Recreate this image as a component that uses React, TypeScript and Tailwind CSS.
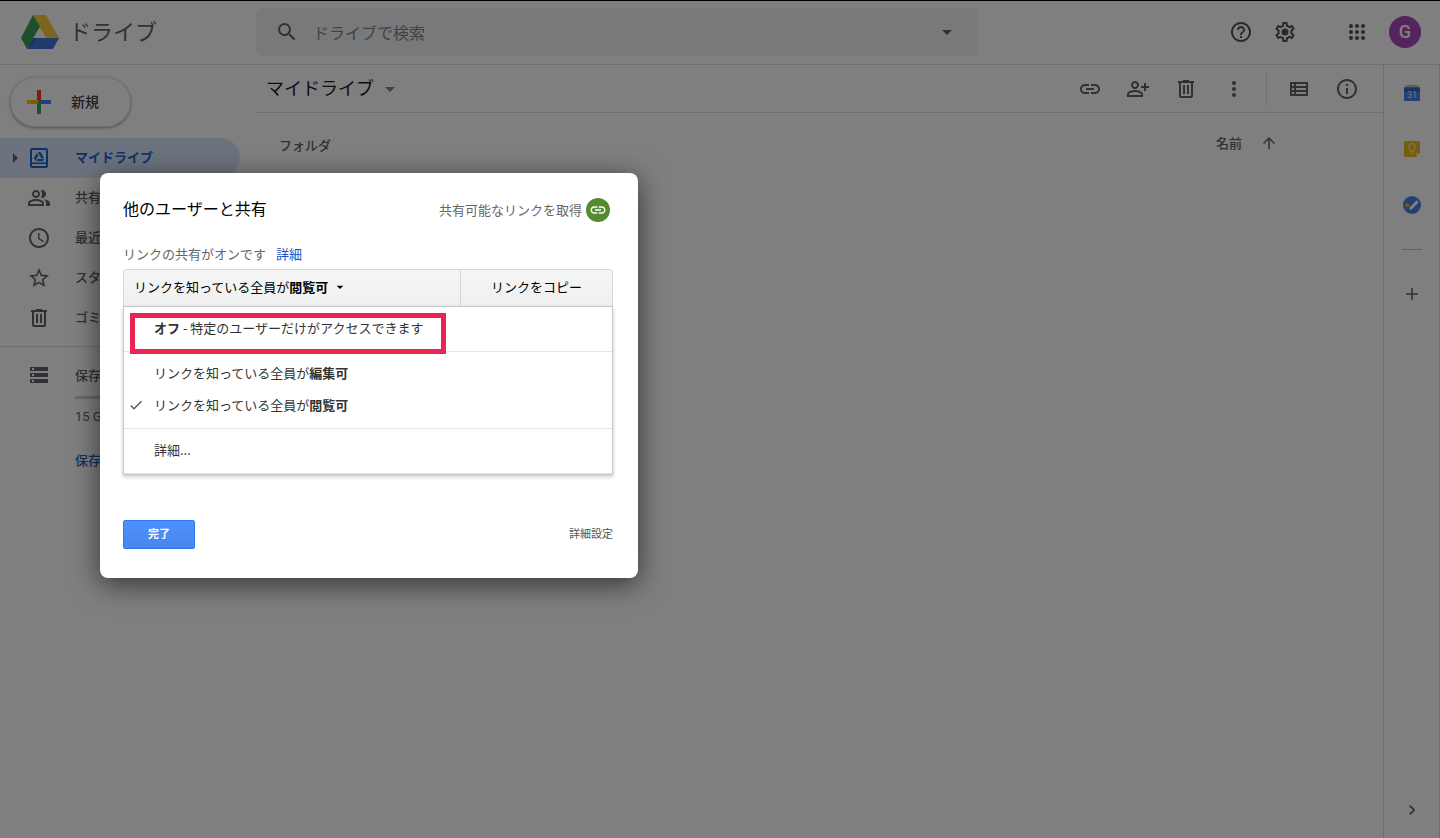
import React from 'react';
import {
  MdAccessTime,
  MdAdd,
  MdArrowDropDown,
  MdArrowRight,
  MdArrowUpward,
  MdCheck,
  MdChevronRight,
  MdHelpOutline,
  MdInfoOutline,
  MdLink,
  MdMoreVert,
  MdSearch,
  MdStarBorder,
} from 'react-icons/md';

type IconProps = { className?: string };

const DriveLogo = () => (
  <svg viewBox="0 0 38 34" className="h-[34px] w-[38px]" aria-hidden="true">
    <path d="M12 0h13l13 23H25z" fill="#fbc93e" />
    <path d="M12 0l7 11.6L6 34 0 23z" fill="#3a9f5b" />
    <path d="M12.4 23H38l-6 11H6z" fill="#3f77d8" />
    <path d="M12.4 23l4 0L6 34z" fill="#2f62b8" />
  </svg>
);

const NewPlus = () => (
  <svg viewBox="0 0 24 24" className="size-6" aria-hidden="true">
    <path d="M10 0h4v12h-4z" fill="#ea4335" />
    <path d="M10 12h4v12h-4z" fill="#34a853" />
    <path d="M0 10h12l-2 4H0z" fill="#fbbc04" />
    <path d="M14 10h10v4H12z" fill="#4285f4" />
  </svg>
);

const MyDriveIcon = ({ className }: IconProps) => (
  <svg viewBox="0 0 24 24" className={className} fill="currentColor" aria-hidden="true">
    <path
      fillRule="evenodd"
      d="M5 2h14c1.1 0 2 .9 2 2v16c0 1.1-.9 2-2 2H5c-1.1 0-2-.9-2-2V4c0-1.100.9-2 2-2zm0 2v12.500h14V4zm0 14v2h14v-2z"
    />
    <path d="M10.700 6h2.800l3.700 6.300h-2.900zM10 7l1.500 2.500-3.200 5.200L6.800 12.300zM10.600 12.900h6.500l-1.400 2.300H9.200z" />
  </svg>
);

const PeopleIcon = ({ className }: IconProps) => (
  <svg viewBox="0 0 24 24" className={className} fill="currentColor" aria-hidden="true">
    <path d="M16.67 13.13C18.04 14.06 19 15.32 19 17v3h4v-3c0-2.18-3.57-3.47-6.33-3.87zM15 12c2.210 0 4-1.790 4-4s-1.790-4-4-4c-.47 0-.91.1-1.330.24C14.5 5.270 15 6.580 15 8s-.5 2.730-1.330 3.760c.42.14.86.24 1.330.24z" />
    <path d="M9 12c2.210 0 4-1.790 4-4s-1.790-4-4-4-4 1.790-4 4 1.790 4 4 4zm0-6c1.100 0 2 .9 2 2s-.9 2-2 2-2-.9-2-2 .9-2 2-2zM9 13c-2.670 0-8 1.340-8 4v3h16v-3c0-2.660-5.330-4-8-4zm6 5H3v-.99C3.200 16.290 6.300 15 9 15s5.800 1.290 6 2v1z" />
  </svg>
);

const PersonAddIcon = ({ className }: IconProps) => (
  <svg viewBox="0 0 24 24" className={className} fill="currentColor" aria-hidden="true">
    <path d="M9 12c2.210 0 4-1.790 4-4s-1.790-4-4-4-4 1.790-4 4 1.790 4 4 4zm0-6c1.100 0 2 .9 2 2s-.9 2-2 2-2-.9-2-2 .9-2 2-2zM9 13c-2.670 0-8 1.340-8 4v3h16v-3c0-2.660-5.330-4-8-4zm6 5H3v-.99C3.200 16.290 6.300 15 9 15s5.800 1.290 6 2v1z" />
    <path d="M20 9V6h-2v3h-3v2h3v3h2v-3h3V9z" />
  </svg>
);

const TrashIcon = ({ className }: IconProps) => (
  <svg viewBox="0 0 24 24" className={className} fill="currentColor" aria-hidden="true">
    <path d="M15 4V3H9v1H4v2h1v13c0 1.100.9 2 2 2h10c1.100 0 2-.9 2-2V6h1V4h-5zm2 15H7V6h10v13zM9 8h2v9H9zm4 0h2v9h-2z" />
  </svg>
);

const StorageIcon = ({ className }: IconProps) => (
  <svg viewBox="0 0 24 24" className={className} fill="currentColor" aria-hidden="true">
    <path
      fillRule="evenodd"
      d="M3 4h18v4H3zm2 1v2h2V5zM3 10h18v4H3zm2 1v2h2v-2zM3 16h18v4H3zm2 1v2h2v-2z"
    />
  </svg>
);

const ListIcon = ({ className }: IconProps) => (
  <svg viewBox="0 0 24 24" className={className} fill="currentColor" aria-hidden="true">
    <path d="M3 5v14h18V5H3zm4 2v2H5V7h2zm-2 6v-2h2v2H5zm0 2h2v2H5v-2zm14 2H9v-2h10v2zm0-4H9v-2h10v2zm0-4H9V7h10v2z" />
  </svg>
);

const GearIcon = ({ className }: IconProps) => (
  <svg viewBox="0 0 24 24" className={className} fill="currentColor" aria-hidden="true">
    <path d="M19.43 12.98c.04-.32.07-.64.07-.98 0-.34-.03-.66-.07-.98l2.11-1.65c.19-.15.24-.42.12-.64l-2-3.46c-.09-.16-.26-.25-.44-.25-.06 0-.12.01-.17.03l-2.49 1c-.52-.4-1.08-.73-1.69-.98l-.38-2.65C14.46 2.18 14.25 2 14 2h-4c-.25 0-.46.18-.49.42l-.38 2.65c-.61.25-1.17.59-1.69.98l-2.49-1c-.06-.02-.12-.03-.18-.03-.17 0-.34.09-.43.25l-2 3.46c-.13.22-.07.49.12.64l2.11 1.65c-.04.32-.07.65-.07.98 0 .33.03.66.07.98l-2.11 1.65c-.19.15-.24.42-.12.64l2 3.46c.09.16.26.25.44.25.06 0 .12-.01.17-.03l2.49-1c.52.4 1.08.73 1.69.98l.38 2.65c.03.24.24.42.49.42h4c.25 0 .46-.18.49-.42l.38-2.65c.61-.25 1.17-.59 1.69-.98l2.49 1c.06.02.12.03.18.03.17 0 .34-.09.43-.25l2-3.46c.12-.22.07-.49-.12-.64l-2.11-1.65zm-1.98-1.71c.04.31.05.52.05.73 0 .21-.02.43-.05.73l-.14 1.13.89.7 1.08.84-.7 1.21-1.27-.51-1.04-.42-.9.68c-.43.32-.84.56-1.25.73l-1.06.43-.16 1.13-.2 1.35h-1.4l-.19-1.35-.16-1.13-1.06-.43c-.43-.18-.83-.41-1.23-.71l-.91-.7-1.06.43-1.27.51-.7-1.21 1.08-.84.89-.7-.14-1.13c-.03-.31-.05-.54-.05-.74s.02-.43.05-.73l.14-1.13-.89-.7-1.08-.84.7-1.21 1.27.51 1.04.42.9-.68c.43-.32.84-.56 1.25-.73l1.06-.43.16-1.13.2-1.35h1.39l.19 1.35.16 1.13 1.06.43c.43.18.83.41 1.23.71l.91.7 1.06-.43 1.27-.51.7 1.21-1.07.85-.89.7.14 1.13z" />
    <circle cx="12" cy="12" r="3.5" />
  </svg>
);

const AppsIcon = ({ className }: IconProps) => (
  <svg viewBox="0 0 24 24" className={className} fill="currentColor" aria-hidden="true">
    {[6, 12, 18].map((y) => [6, 12, 18].map((x) => <circle key={`${x}-${y}`} cx={x} cy={y} r="2" />))}
  </svg>
);

const CalendarIcon = () => (
  <svg viewBox="0 0 16 16" className="size-4" aria-hidden="true">
    <path d="M1.500 0h13v3h-13z" fill="#b9bec6" />
    <path d="M0 2.500h16V15a1 1 0 0 1-1 1H1a1 1 0 0 1-1-1z" fill="#4a80ee" />
    <path d="M0 2.500h16V7H0z" fill="#3a66c8" />
    <text x="8" y="13" textAnchor="middle" fontSize="9" fontFamily="Roboto, sans-serif" fill="#e8eefc">31</text>
  </svg>
);

const KeepIcon = () => (
  <svg viewBox="0 0 16 16" className="size-4" aria-hidden="true">
    <path d="M1 0h14a1 1 0 0 1 1 1v11l-4 4H1a1 1 0 0 1-1-1V1a1 1 0 0 1 1-1z" fill="#f5b921" />
    <path d="M16 12l-4 4v-4z" fill="#fde293" />
    <path d="M6.500 10.300V8.900a3.300 3.300 0 1 1 3 0v1.400zM6.500 12.300h3" fill="none" stroke="#fff3cf" />
  </svg>
);

const TasksIcon = () => (
  <svg viewBox="0 0 18 18" className="size-[18px]" aria-hidden="true">
    <circle cx="9" cy="9" r="9" fill="#4a80e8" />
    <circle cx="4.300" cy="9.300" r="2" fill="#f5b921" />
    <path d="M7.800 12.200l6-6" stroke="#fff" strokeWidth="3" strokeLinecap="round" />
  </svg>
);

const navItems = [
  { icon: MyDriveIcon, label: 'マイドライブ', active: true },
  { icon: PeopleIcon, label: '共有' },
  { icon: MdAccessTime, label: '最近' },
  { icon: MdStarBorder, label: 'スター' },
  { icon: TrashIcon, label: 'ゴミ箱' },
];

const toolbarItems = [
  { icon: MdLink, label: '共有可能なリンクを取得' },
  { icon: PersonAddIcon, label: '共有' },
  { icon: TrashIcon, label: '削除' },
  { icon: MdMoreVert, label: 'その他の操作' },
];

const viewItems = [
  { icon: ListIcon, label: 'リスト表示' },
  { icon: MdInfoOutline, label: '詳細を表示' },
];

const sideApps = [
  { icon: CalendarIcon, label: 'カレンダー' },
  { icon: KeepIcon, label: 'Keep' },
  { icon: TasksIcon, label: 'ToDo リスト' },
];

const Header = () => (
  <header className="flex h-[65px] items-center border-t border-b border-t-black border-b-[#dadce0] pr-[19px] pb-0.5">
    <a href="#" className="flex w-64 shrink-0 items-center gap-2.5 pl-[21px] text-[22px] leading-8 text-[#5f6368]">
      <DriveLogo />
      <span className="pb-1">ドライブ</span>
    </a>
    <div className="flex h-12 max-w-[722px] flex-1 items-center rounded-lg bg-[#f1f3f4] text-[#5f6368]">
      <button aria-label="検索" className="pl-[19px]">
        <MdSearch className="size-6" />
      </button>
      <input
        type="text"
        aria-label="ドライブで検索"
        placeholder="ドライブで検索"
        className="h-12 flex-1 bg-transparent pl-[14px] text-base outline-none placeholder:text-[#80868b]"
      />
      <button aria-label="検索オプション" className="pr-[19px] text-[#5f6368]">
        <MdArrowDropDown className="size-6" />
      </button>
    </div>
    <div className="ml-auto flex items-center gap-1 text-[#505357]">
      <button aria-label="ヘルプ" className="flex size-10 items-center justify-center">
        <MdHelpOutline className="size-6" />
      </button>
      <button aria-label="設定" className="flex size-10 items-center justify-center">
        <GearIcon className="size-6" />
      </button>
      <button aria-label="Google アプリ" className="ml-7 flex size-10 items-center justify-center">
        <AppsIcon className="size-6" />
      </button>
      <button className="ml-2 flex size-8 items-center justify-center rounded-full bg-[#ab47bc] font-[Roboto,sans-serif] text-lg font-medium text-white">
        G
      </button>
    </div>
  </header>
);

const Sidebar = () => (
  <nav className="w-64 shrink-0 text-[13px] text-[#5f6368]">
    <button className="mt-3 ml-2.5 flex h-[50px] items-center gap-5 rounded-full border border-[#e4e5e7] bg-white pr-[31px] pl-4 text-sm font-medium text-[#3c4043] shadow-[0_1px_3px_rgba(60,64,67,0.5)]">
      <NewPlus />
      <span className="pb-0.5">新規</span>
    </button>
    <ul className="mt-[11px] mr-4">
      {navItems.map((item) => (
        <li key={item.label}>
          <a
            href="#"
            className={
              item.active
                ? 'flex h-10 items-center rounded-r-full bg-[#dbe7fd] font-bold text-[#1967d2]'
                : 'flex h-10 items-center font-medium'
            }
          >
            <span className="flex w-[27px] justify-end text-[#5f6368]">
              {item.active && <MdArrowRight className="size-6" />}
            </span>
            <item.icon className="size-6" />
            <span className="pb-0.5 pl-6">{item.label}</span>
          </a>
        </li>
      ))}
    </ul>
    <div className="mt-2 border-t border-[#dadce0] pt-2">
      <a href="#" className="flex h-10 items-center pl-[27px] font-medium">
        <StorageIcon className="size-6 text-[#5f6368]" />
        <span className="pl-6">保存</span>
      </a>
      <div className="mr-6 ml-[75px]">
        <div className="mt-[1px] h-[3px] bg-[#cfd1d4]" />
        <p className="mt-2 font-[Roboto,'Noto_Sans_CJK_JP',sans-serif] leading-5">15 GB</p>
        <a href="#" className="mt-[23px] block font-medium leading-5 text-[#1967d2]">保存容量</a>
      </div>
    </div>
  </nav>
);

const Content = () => (
  <main className="flex-1">
    <div className="flex h-12 items-center border-b border-[#dadce0] pr-3 text-[#5f6368]">
      <button className="flex items-center gap-1 pl-2.5 text-lg leading-6 text-[#202124]">
        <span className="pb-1">マイドライブ</span>
        <MdArrowDropDown className="size-6 text-[#80868b]" />
      </button>
      <div className="ml-auto flex items-center">
        {toolbarItems.map((item) => (
          <button key={item.label} aria-label={item.label} className="flex h-10 w-12 items-center justify-center">
            <item.icon className="size-6" />
          </button>
        ))}
        <div className="mx-2 h-8 w-px bg-[#dadce0]" />
        {viewItems.map((item) => (
          <button key={item.label} aria-label={item.label} className="flex h-10 w-12 items-center justify-center">
            <item.icon className="size-6" />
          </button>
        ))}
      </div>
    </div>
    <div className="flex items-center justify-between pt-[18px] pr-[105px] pl-[23px] text-[13px] font-medium text-[#5f6368]">
      <h2 className="pt-1">フォルダ</h2>
      <button className="flex items-center gap-[18px]">
        名前
        <MdArrowUpward className="size-[18px]" />
      </button>
    </div>
  </main>
);

const SidePanel = () => (
  <aside className="flex w-[57px] shrink-0 flex-col items-center border-x border-[#dadce0] text-[#5f6368]">
    {sideApps.map((app) => (
      <button key={app.label} aria-label={app.label} className="flex size-14 items-center justify-center">
        <app.icon />
      </button>
    ))}
    <div className="my-4 h-px w-5 bg-[#c4c7cb]" />
    <button aria-label="アドオンを取得" className="flex size-14 items-center justify-center">
      <MdAdd className="size-5" />
    </button>
    <button aria-label="サイドパネルを非表示" className="mt-auto flex size-14 items-center justify-center">
      <MdChevronRight className="size-5" />
    </button>
  </aside>
);

const ShareMenu = () => (
  <div
    role="menu"
    className="relative divide-y divide-[#e5e5e5] border border-[#c6c6c6] bg-white text-[#333] shadow-[0_2px_4px_rgba(0,0,0,0.2)]"
  >
    <div className="pt-[5px] pb-[7px]">
      <button role="menuitem" className="flex h-8 w-full items-center pl-[30px]">
        <span><b>オフ</b> - 特定のユーザーだけがアクセスできます</span>
      </button>
    </div>
    <div className="pt-[5px] pb-[7px]">
      <button role="menuitem" className="flex h-8 w-full items-center pl-[30px]">
        リンクを知っている全員が<b>編集可</b>
      </button>
      <button role="menuitem" className="flex h-8 w-full items-center">
        <span className="w-[30px] pl-1"><MdCheck className="size-4 text-[#555]" /></span>
        リンクを知っている全員が<b>閲覧可</b>
      </button>
    </div>
    <div className="pt-[5px] pb-[7px]">
      <button role="menuitem" className="flex h-8 w-full items-center pl-[30px]">
        詳細...
      </button>
    </div>
    {/* highlight around the first choice */}
    <div className="pointer-events-none absolute top-1.5 left-1.5 h-[41px] w-[316px] border-[5px] border-[#ed2453]" />
  </div>
);

const ShareDialog = () => (
  <div
    role="dialog"
    aria-labelledby="share-title"
    className="absolute top-[173px] left-[100px] w-[538px] rounded-lg bg-white pt-[25px] pr-[25px] pb-[29px] pl-[23px] text-[13px] shadow-[0_6px_28px_rgba(0,0,0,0.6)]"
  >
    <div className="flex items-center justify-between">
      <h1 id="share-title" className="pb-1 text-base leading-5 text-black">他のユーザーと共有</h1>
      <button className="flex items-center gap-1 pr-[3px] text-[#666]">
        共有可能なリンクを取得
        <span className="flex size-6 items-center justify-center rounded-full bg-[#558b2f] text-white">
          <MdLink className="size-[18px]" />
        </span>
      </button>
    </div>
    <p className="mt-5 leading-6 text-[#666]">
      リンクの共有がオンです
      <a href="#" className="ml-2.5 text-[#1a53c8]">詳細</a>
    </p>
    <div className="mt-[3px] flex h-[37px] rounded-t-sm border border-b-0 border-[#d9d9d9] bg-linear-to-b from-[#f5f5f5] to-[#f0f0f0] text-black">
      <button className="flex flex-1 items-center border-r border-[#d4d4d4] pb-0.5 pl-2.5">
        リンクを知っている全員が<b>閲覧可</b>
        <MdArrowDropDown className="ml-1 size-4" />
      </button>
      <button className="w-[151px] pb-0.5">リンクをコピー</button>
    </div>
    <ShareMenu />
    <div className="mt-[45px] flex items-center justify-between text-[11px]">
      <button className="h-[29px] w-[72px] rounded-xs border border-[#3079ed] bg-linear-to-b from-[#4d90fe] to-[#4787ed] pb-0.5 font-bold text-white">
        完了
      </button>
      <a href="#" className="pb-0.5 text-[#555]">詳細設定</a>
    </div>
  </div>
);

const App = () => {
  return (
    <div className="relative flex min-h-screen flex-col bg-white font-['Noto_Sans_CJK_JP',sans-serif]">
      <Header />
      <div className="flex flex-1">
        <Sidebar />
        <Content />
        <SidePanel />
      </div>
      <div className="absolute inset-0 bg-black/50" />
      <ShareDialog />
    </div>
  );
};

export default App;
